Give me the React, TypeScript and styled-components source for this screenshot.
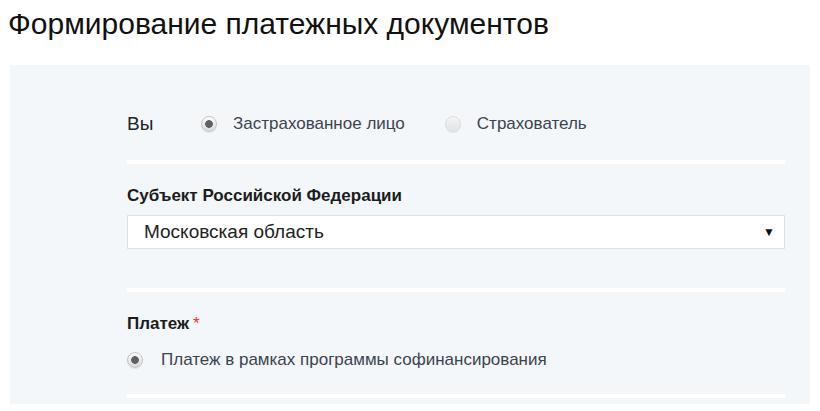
import styled, { createGlobalStyle } from "styled-components";

const Global = createGlobalStyle`
  body {
    margin: 0;
    background: #ffffff;
    font-family: "Liberation Sans", Arial, sans-serif;
  }
`;

const Page = styled.div`
  padding: 7px 0 0 0;
`;

const Title = styled.h1`
  margin: 0 0 0 8px;
  font-size: 30px;
  font-weight: 400;
  line-height: 34px;
  color: #111;
`;

const Panel = styled.div`
  margin: 24px 0 0 10px;
  width: 800px;
  background: #f4f7fa;
  padding: 39px 25px 6px 117px;
  box-sizing: border-box;
  display: flex;
  flex-direction: column;
`;

const Row = styled.div`
  display: flex;
  align-items: center;
  height: 40px;
`;

const Who = styled.span`
  font-size: 19px;
  color: #222;
  width: 74px;
`;

const Option = styled.label`
  display: flex;
  align-items: center;
  gap: 16px;
  margin-right: 40px;
  font-size: 17px;
  line-height: 20px;
  color: #3b4450;
`;

const Radio = styled.span<{ checked?: boolean }>`
  flex: none;
  width: 16px;
  height: 16px;
  border-radius: 50%;
  box-sizing: border-box;
  border: 1px solid ${(p) => (p.checked ? "#c4c6c8" : "#dcdee0")};
  background: ${(p) =>
    p.checked
      ? "radial-gradient(circle, #5f6163 0 3.5px, transparent 4.2px), linear-gradient(#fdfdfd, #d8d9da)"
      : "linear-gradient(#f4f4f4, #e2e3e4)"};
  box-shadow: 0 1px 1px rgba(0, 0, 0, 0.08);
`;

const Divider = styled.div<{ top: number }>`
  height: 4px;
  background: #ffffff;
  margin-top: ${(p) => p.top}px;
`;

const Label = styled.div`
  font-size: 17px;
  font-weight: 700;
  color: #1c1c1c;
  line-height: 20px;
`;

const Required = styled.span`
  color: #e2312d;
  font-weight: 400;
  margin-left: 4px;
`;

const SelectBox = styled.div`
  margin-top: 9px;
  height: 34px;
  background: #fff;
  border: 1px solid #dfe1e3;
  display: flex;
  align-items: center;
  justify-content: space-between;
  padding: 0 9px 0 16px;
  box-sizing: border-box;
  font-size: 19px;
  color: #222;
`;

const Arrow = styled.span`
  font-size: 12px;
  color: #111;
`;

const Section = styled.div<{ top: number }>`
  margin-top: ${(p) => p.top}px;
  display: flex;
  flex-direction: column;
`;

const SingleOption = styled(Option)`
  margin-top: 16px;
  gap: 18px;
`;

export default function App() {
  return (
    <Page>
      <Global />
      <Title>Формирование платежных документов</Title>
      <Panel>
        <Row>
          <Who>Вы</Who>
          <Option>
            <Radio checked />
            Застрахованное лицо
          </Option>
          <Option>
            <Radio />
            Страхователь
          </Option>
        </Row>
        <Divider top={16} />
        <Section top={22}>
          <Label>Субъект Российской Федерации</Label>
          <SelectBox>
            <span>Московская область</span>
            <Arrow>▼</Arrow>
          </SelectBox>
        </Section>
        <Divider top={39} />
        <Section top={22}>
          <Label>
            Платеж<Required>*</Required>
          </Label>
          <SingleOption>
            <Radio checked />
            Платеж в рамках программы софинансирования
          </SingleOption>
        </Section>
        <Divider top={24} />
      </Panel>
    </Page>
  );
}
